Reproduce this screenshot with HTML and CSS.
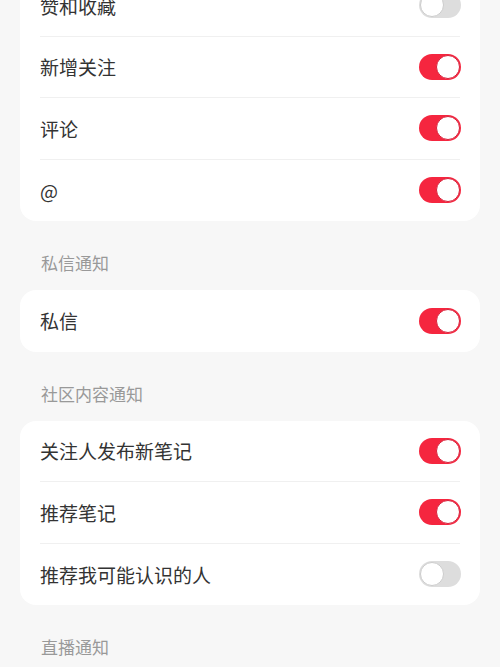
FILE: index.html
```html
<!DOCTYPE html>
<html lang="zh-CN">
<head>
    <meta charset="UTF-8">
    <meta name="viewport" content="width=device-width, initial-scale=1.0">
    <title>通知设置</title>
    <link rel="stylesheet" href="styles.css">
</head>
<body>

    <div class="page">
        <!-- 互动通知 -->
        <div class="card first">
            <div class="row"><span class="label">赞和收藏</span><span class="switch"></span></div>
            <div class="row"><span class="label">新增关注</span><span class="switch on"></span></div>
            <div class="row"><span class="label">评论</span><span class="switch on"></span></div>
            <div class="row"><span class="label">@</span><span class="switch on"></span></div>
        </div>

        <div class="section-title">私信通知</div>
        <div class="card">
            <div class="row"><span class="label">私信</span><span class="switch on"></span></div>
        </div>

        <div class="section-title">社区内容通知</div>
        <div class="card">
            <div class="row"><span class="label">关注人发布新笔记</span><span class="switch on"></span></div>
            <div class="row"><span class="label">推荐笔记</span><span class="switch on"></span></div>
            <div class="row"><span class="label">推荐我可能认识的人</span><span class="switch"></span></div>
        </div>

        <div class="section-title">直播通知</div>
    </div>

</body>
</html>
```

FILE: styles.css
```css
body {
    margin: 0;
    background-color: #f7f7f7;
    color: #333;
    font-family: "Noto Sans CJK SC", "Noto Sans", sans-serif;
    overflow: hidden;
}
.page {
    padding: 0 20px;
}
.card {
    background-color: #fff;
    border-radius: 16px;
    padding: 0 20px;
}
.card.first {
    margin-top: -25px;
}
.row {
    height: 61.5px;
    display: flex;
    align-items: center;
    justify-content: space-between;
    border-bottom: 1px solid #f0f0f0;
    box-sizing: border-box;
}
.row:last-child {
    border-bottom: none;
}
.label {
    font-size: 19px;
    color: #333;
}
.section-title {
    font-size: 17px;
    line-height: 24px;
    color: #999;
    padding: 30px 21px 15px;
}
.switch {
    position: relative;
    width: 42px;
    height: 26px;
    margin-right: -1px;
    border-radius: 13px;
    background-color: #ddd;
    box-sizing: border-box;
}
.switch::after {
    content: "";
    position: absolute;
    top: 1px;
    left: 1px;
    width: 24px;
    height: 24px;
    border-radius: 50%;
    background-color: #fff;
    border: 1px solid #ccc;
    box-sizing: border-box;
}
.switch.on {
    background-color: #f5263f;
}
.switch.on::after {
    left: 17px;
    border-color: #d8203a;
}
```
